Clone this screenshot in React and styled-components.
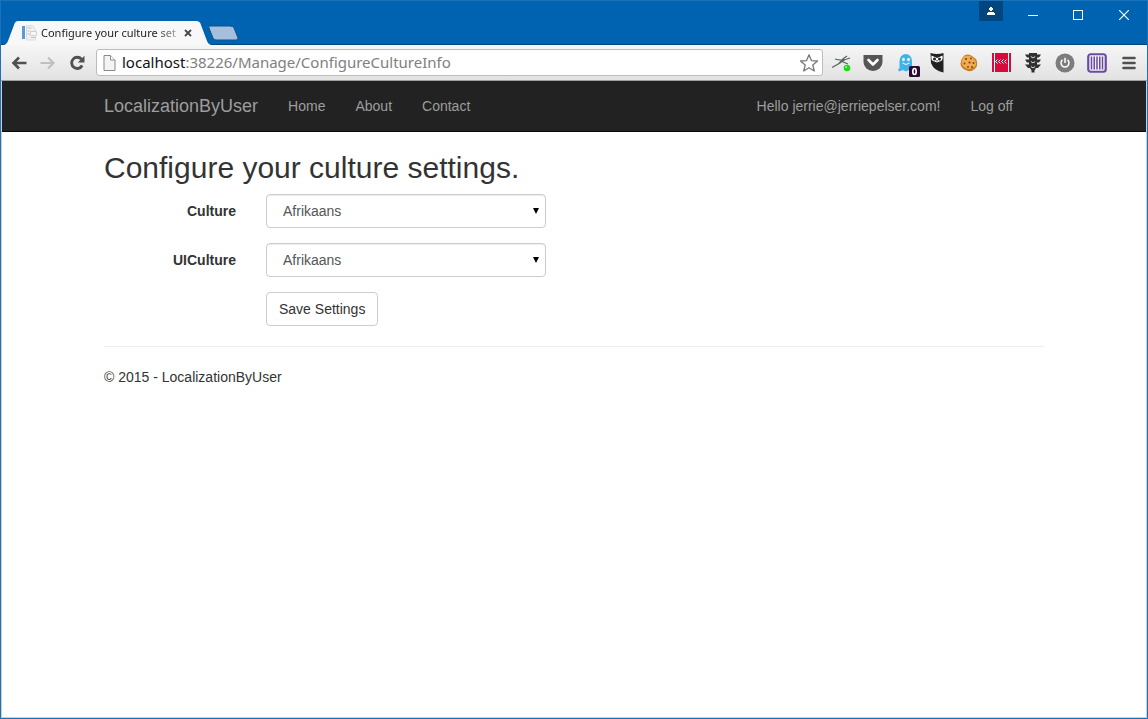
import React from 'react';
import styled, { createGlobalStyle } from 'styled-components';

const GlobalStyle = createGlobalStyle`
  *, *::before, *::after { box-sizing: border-box; }
  body {
    margin: 0;
    background: #fff;
    color: #333;
    font: 14px/20px "Liberation Sans", Arial, sans-serif;
  }
  button, input, select { font: inherit; }
  svg { display: block; }
`;

const Frame = styled.div`
  display: flex;
  flex-direction: column;
  min-height: 100vh;
  border: 1px solid #1a72b9;
`;

/* ---------- browser chrome ---------- */

const TitleBar = styled.header`
  display: flex;
  justify-content: space-between;
  height: 44px;
  background: #0063b1;
  box-shadow: inset 0 -1px #00457c;
`;

const TabStrip = styled.div`
  display: flex;
  align-items: flex-end;
  padding-left: 2px;
`;

const Tab = styled.div`
  position: relative;
  display: flex;
  align-items: center;
  width: 210px;
  height: 24px;
  padding: 0 12px 0 19px;
`;

const TabShape = styled.svg`
  position: absolute;
  inset: 0;
`;

const TabContent = styled.div`
  position: relative;
  display: flex;
  align-items: center;
  min-width: 0;
  flex: 1;
`;

const TabTitle = styled.span`
  width: 138px;
  margin: 0 1px 0 3px;
  white-space: nowrap;
  color: #222;
  font: 11px/24px "Noto Sans", "Open Sans", sans-serif;
  mask-image: linear-gradient(to right, #000 114px, rgba(0, 0, 0, 0.3) 138px);
`;

const IconButton = styled.button`
  display: grid;
  place-items: center;
  flex: none;
  width: ${p => p.$width || 32}px;
  height: ${p => p.$height || 28}px;
  padding: 0;
  border: 0;
  background: ${p => p.$background || 'transparent'};
`;

const NewTab = styled(IconButton)`
  align-self: flex-end;
  margin: 0 0 4px -6px;
`;

const WindowControls = styled.div`
  display: flex;
  align-items: flex-start;
`;

const UserBadge = styled(IconButton)`
  margin-right: 7px;
`;

const Toolbar = styled.div`
  display: flex;
  align-items: center;
  height: 36px;
  padding: 0 2px 0 3px;
  background: linear-gradient(#f6f6f6, #e2e2e2);
  border-bottom: 1px solid #9f9f9f;
`;

const AddressBox = styled.form`
  display: flex;
  align-items: center;
  flex: 1;
  min-width: 0;
  height: 27px;
  margin: 0 2px 0 4px;
  padding: 0 0 0 6px;
  border: 1px solid #bcbcbc;
  border-radius: 3px;
  background: #fff;
`;

const Address = styled.div`
  flex: 1;
  min-width: 0;
  margin-left: 6px;
  padding-bottom: 2px;
  white-space: nowrap;
  color: #808080;
  font: 15px/22px "Noto Sans", "Open Sans", sans-serif;
`;

const Host = styled.span`
  color: #111;
`;

/* ---------- page ---------- */

const Viewport = styled.div`
  flex: 1;
  border: solid #d0d0d0;
  border-width: 0 1px 1px;
`;

const NavBar = styled.nav`
  background: #222;
  border-bottom: 1px solid #080808;
`;

const Container = styled.div`
  max-width: 970px;
  margin: 0 auto;
  padding: 0 15px;
`;

const NavRow = styled(Container)`
  display: flex;
  height: 50px;
`;

const NavLink = styled.a`
  padding: 15px;
  color: #9d9d9d;
  text-decoration: none;
`;

const Brand = styled(NavLink)`
  margin-left: -15px;
  font-size: 18px;
`;

const NavRight = styled.div`
  display: flex;
  margin-left: auto;
  padding-right: 16px;
`;

const Title = styled.h2`
  margin: 19px 0 10px;
  font-size: 30px;
  line-height: 33px;
  font-weight: normal;
`;

const FormRow = styled.div`
  display: grid;
  grid-template-columns: 132px minmax(0, 280px);
  column-gap: 30px;
  margin-bottom: ${p => (p.$last ? 20 : 15)}px;
`;

const Label = styled.label`
  padding-top: 7px;
  text-align: right;
  font-weight: bold;
`;

const SelectBox = styled.div`
  position: relative;
`;

const Select = styled.select`
  appearance: none;
  display: block;
  width: 100%;
  height: 34px;
  padding: 6px 16px;
  border: 1px solid #ccc;
  border-radius: 4px;
  background: #fff;
  color: #555;
  box-shadow: inset 0 1px 1px rgba(0, 0, 0, 0.075);
`;

const SelectArrow = styled.svg`
  position: absolute;
  right: 7px;
  top: 14px;
  pointer-events: none;
`;

const SaveButton = styled.button`
  grid-column: 2;
  justify-self: start;
  height: 34px;
  padding: 6px 12px;
  border: 1px solid #ccc;
  border-radius: 4px;
  background: #fff;
  color: #333;
`;

const Footer = styled.footer`
  padding: 20px 0;
  border-top: 1px solid #eee;
`;

const FooterText = styled.p`
  margin: 0;
`;

/* ---------- icons ---------- */

const Favicon = () => (
  <svg width="16" height="16">
    <rect x="0" y="1" width="3" height="13" fill="#5b9bd5" />
    <path d="M4.500 .5h6l3 4v10.500h-9z" fill="#f0f0f0" stroke="#dcdcdc" />
    <path d="M5.500 3h4M5.500 6h2M5.500 9h2M9 12.500h5" stroke="#c4c4c4" />
    <path d="M8.500 6.500h6v4h-6z" fill="#f8f8f8" stroke="#d0d0d0" />
  </svg>
);

const Arrow = ({ color, flip }) => (
  <svg width="16" height="14" viewBox="0 0 16 14">
    <path d="M8 1.500L2.500 7L8 12.500M3 7H15.500" transform={flip ? 'rotate(180 8 7)' : undefined}
      fill="none" stroke={color} strokeWidth={flip ? 2.2 : 2.6} />
  </svg>
);

const Reload = () => (
  <svg width="16" height="16" viewBox="0 0 16 16">
    <path d="M12.500 4.200A5.600 5.600 0 1 0 13.200 10.500" fill="none" stroke="#505050" strokeWidth="2.800" />
    <path d="M15.500 .8V7.500H8.800z" fill="#505050" />
  </svg>
);

const PageIcon = () => (
  <svg width="13" height="16">
    <path d="M1 .5h6.500L12 5v10.500H1z" fill="#f4f4f4" stroke="#8a8a8a" />
    <path d="M7.500 .5V5H12" fill="#fff" stroke="#8a8a8a" />
  </svg>
);

const Star = () => (
  <svg width="20" height="20" viewBox="0 0 20 20">
    <path d="M10 1.800L12.400 7.600L18.500 8L13.800 12L15.300 18L10 14.700L4.700 18L6.200 12L1.500 8L7.600 7.600z"
      fill="#fff" stroke="#777" strokeWidth="1.300" strokeLinejoin="round" />
  </svg>
);

const Gazelle = () => (
  <svg width="20" height="20">
    <path d="M1 14.500L9 10L12.500 5.500L16 3M4 6Q11 8.500 19 5M11 8.500L17 11" fill="none" stroke="#5c645c" strokeWidth="1.300" />
    <path d="M7 10.500L12 5.500L14 7.500L11.500 9z" fill="#5c645c" />
    <circle cx="16" cy="15" r="3.300" fill="#1ddb12" />
    <circle cx="15.200" cy="14" r="1" fill="#9bff8b" />
  </svg>
);

const Pocket = () => (
  <svg width="20" height="18">
    <path d="M.5 1h19v7a9.500 9 0 0 1-19 0z" fill="#565656" />
    <path d="M5.500 6L10 10.500L14.500 6" fill="none" stroke="#fff" strokeWidth="2.600" strokeLinecap="round" strokeLinejoin="round" />
  </svg>
);

const Ghost = () => (
  <svg width="30" height="28">
    <path d="M9.500 12a6.250 7 0 0 1 12.500 0v10l-3-1l-3 1.500l-3-1.500l-4 1.500l-1-2l1.500-1.500z" fill="#3fb3e8" />
    <ellipse cx="13.500" cy="10.500" rx="1.300" ry="1.700" fill="#fff" />
    <ellipse cx="18.500" cy="10.500" rx="1.300" ry="1.700" fill="#fff" />
    <path d="M12.500 14q3.500 3 7 0" fill="none" stroke="#fff" />
    <rect x="19" y="17" width="11" height="11" rx="1.500" fill="#2d0a35" />
    <ellipse cx="24.500" cy="22.500" rx="1.700" ry="3" fill="none" stroke="#fff" strokeWidth="1.700" />
  </svg>
);

const Owl = () => (
  <svg width="14" height="20">
    <path d="M.5 0Q7 2 13.500 0V19.500Q4 18 1 10z" fill="#222" />
    <path d="M1.500 2.500L7 5L12.500 2.500Q13.500 8 9.500 8.500L7 9.500L4.500 8.500Q.5 8 1.500 2.500z" fill="#fff" />
    <circle cx="4.500" cy="6" r="1.500" fill="#222" />
    <circle cx="9.500" cy="6" r="1.500" fill="#222" />
    <path d="M6.300 7h1.400L7 9z" fill="#222" />
  </svg>
);

const Cookie = () => (
  <svg width="18" height="18">
    <path d="M5 1Q9-.5 12 2L16 5Q18 9 16.500 13Q13 18 8 17Q1 15 .5 10Q1 4 5 1z" fill="#c97a25" />
    <path d="M5 2Q9 1 12 3L15 6Q17 9 15.500 12Q12 15.500 8 15Q2 13 1.500 9Q2 4 5 2z" fill="#f0ac4f" />
    <g fill="#7a4413">
      <circle cx="6" cy="5" r="1.100" /><circle cx="11" cy="4.500" r=".9" /><circle cx="9.500" cy="8.500" r="1.100" />
      <circle cx="4.500" cy="9.500" r=".9" /><circle cx="13.500" cy="9" r="1" /><circle cx="8" cy="13" r=".9" /><circle cx="12" cy="13" r="1" />
    </g>
  </svg>
);

const RedPanel = () => (
  <svg width="19" height="19">
    <rect width="19" height="19" fill="#d8093b" />
    <path d="M2.500 0V19M16.500 0V19" stroke="#fff" />
    <path d="M5.500 6.500l-2 2l2 2M8.500 6.500l-2 2l2 2M11.500 6.500l-2 2l2 2M14.500 6.500l-2 2l2 2" fill="none" stroke="#fff" />
  </svg>
);

const TrafficLight = () => (
  <svg width="16" height="20">
    <path d="M4 0h8v1.500h4l-2 3h-2v2h4l-2 3h-2v2h4l-3 3.500h-2l-1.500 2.500v2h-3v-2L5 15H3l-3-3.500h4v-2H2l-2-3h4v-2H2l-2-3h4z" fill="#303030" />
    <g fill="none" stroke="#ddd" strokeWidth="1.100">
      <path d="M6 3.500q2 2.500 4 0M6 8.500q2 2.500 4 0M6 13.500q2 2.500 4 0" />
    </g>
  </svg>
);

const Power = () => (
  <svg width="20" height="20">
    <circle cx="10" cy="10" r="9.500" fill="#7c7c7c" />
    <path d="M7.500 6.800A4 4 0 1 0 12.500 6.800M10 4.800V10" fill="none" stroke="#fff" strokeWidth="1.500" />
  </svg>
);

const Barcode = () => (
  <svg width="20" height="20">
    <rect x="1.250" y="1.250" width="17.500" height="17.500" rx="2.500" fill="#f6f3fb" stroke="#6a4c9f" strokeWidth="2.200" />
    <path d="M4.500 3.500V16.500M7.250 3.500V16.500M10 3.500V16.500M12.750 3.500V16.500M15.500 3.500V16.500" stroke="#6a4c9f" strokeWidth="1.500" />
  </svg>
);

const Menu = () => (
  <svg width="14" height="14">
    <path d="M1.500 2h11M1.500 7h11M1.500 12h11" stroke="#505050" strokeWidth="2.600" strokeLinecap="round" />
  </svg>
);

const toolbarItems = [
  ['Gazelle', Gazelle], ['Save to Pocket', Pocket], ['Ghost blocker', Ghost], ['Owl', Owl],
  ['Cookies', Cookie], ['Panel', RedPanel], ['Traffic light', TrafficLight],
  ['Power', Power], ['Barcode', Barcode], ['Menu', Menu],
];

const CultureSelect = ({ id, label }) => (
  <FormRow>
    <Label htmlFor={id}>{label}</Label>
    <SelectBox>
      <Select id={id} name={id} defaultValue="af">
        <option value="af">Afrikaans</option>
      </Select>
      <SelectArrow width="6" height="6"><path d="M0 0h6L3 6z" fill="#000" /></SelectArrow>
    </SelectBox>
  </FormRow>
);

export default function App() {
  return (
    <Frame>
      <GlobalStyle />
      <TitleBar>
        <TabStrip>
          <Tab>
            <TabShape width="210" height="24">
              <path d="M0 24C3 24 4 22 5 20L11 4C12 1 13 0 15 0H193C196 0 197 1 198 4L204 20C205 22 206 24 210 24z" fill="#f8f8f8" />
            </TabShape>
            <TabContent>
              <Favicon />
              <TabTitle>Configure your culture set</TabTitle>
              <IconButton aria-label="Close tab" $width={16} $height={16}>
                <svg width="8" height="8"><path d="M1 1L7 7M7 1L1 7" stroke="#484848" strokeWidth="1.800" /></svg>
              </IconButton>
            </TabContent>
          </Tab>
          <NewTab aria-label="New tab" $width={32} $height={16}>
            <svg width="32" height="16">
              <path d="M3 1H23Q26 1 27 3L31 13Q31 15 29 15H9Q7 15 6 13L2 3Q1 1 3 1z" fill="#a6c0dc" stroke="#0a5595" />
            </svg>
          </NewTab>
        </TabStrip>
        <WindowControls>
          <UserBadge aria-label="User" $width={24} $height={20} $background="#00457c">
            <svg width="8" height="8" shapeRendering="crispEdges">
              <path d="M3 0h2v1h1v2H5v1H3V3H2V1h1zM1 5h6v1h1v2H0V6h1z" fill="#fff" />
            </svg>
          </UserBadge>
          <IconButton aria-label="Minimize" $width={46}>
            <svg width="10" height="10"><path d="M0 5.500H10" stroke="#fff" /></svg>
          </IconButton>
          <IconButton aria-label="Maximize" $width={44}>
            <svg width="10" height="10"><rect x=".5" y=".5" width="9" height="9" fill="none" stroke="#fff" /></svg>
          </IconButton>
          <IconButton aria-label="Close" $width={47}>
            <svg width="10" height="10"><path d="M0 0L10 10M10 0L0 10" stroke="#fff" strokeWidth="1.200" /></svg>
          </IconButton>
        </WindowControls>
      </TitleBar>

      <Toolbar>
        <IconButton aria-label="Back" $width={30}><Arrow color="#505050" /></IconButton>
        <IconButton aria-label="Forward" $width={28}><Arrow color="#c0c0c0" flip /></IconButton>
        <IconButton aria-label="Reload" $width={30}><Reload /></IconButton>
        <AddressBox>
          <PageIcon />
          <Address><Host>localhost</Host>:38226/Manage/ConfigureCultureInfo</Address>
          <IconButton type="button" aria-label="Bookmark" $width={26} $height={24}><Star /></IconButton>
        </AddressBox>
        {toolbarItems.map(([name, Icon]) => (
          <IconButton key={name} aria-label={name}><Icon /></IconButton>
        ))}
      </Toolbar>

      <Viewport>
        <NavBar>
          <NavRow>
            <Brand href="#">LocalizationByUser</Brand>
            <NavLink href="#">Home</NavLink>
            <NavLink href="#">About</NavLink>
            <NavLink href="#">Contact</NavLink>
            <NavRight>
              <NavLink href="#">Hello jerrie@jerriepelser.com!</NavLink>
              <NavLink href="#">Log off</NavLink>
            </NavRight>
          </NavRow>
        </NavBar>
        <Container as="main">
          <Title>Configure your culture settings.</Title>
          <form>
            <CultureSelect id="culture" label="Culture" />
            <CultureSelect id="uiculture" label="UICulture" />
            <FormRow $last>
              <SaveButton type="button">Save Settings</SaveButton>
            </FormRow>
          </form>
          <Footer>
            <FooterText>© 2015 - LocalizationByUser</FooterText>
          </Footer>
        </Container>
      </Viewport>
    </Frame>
  );
}
